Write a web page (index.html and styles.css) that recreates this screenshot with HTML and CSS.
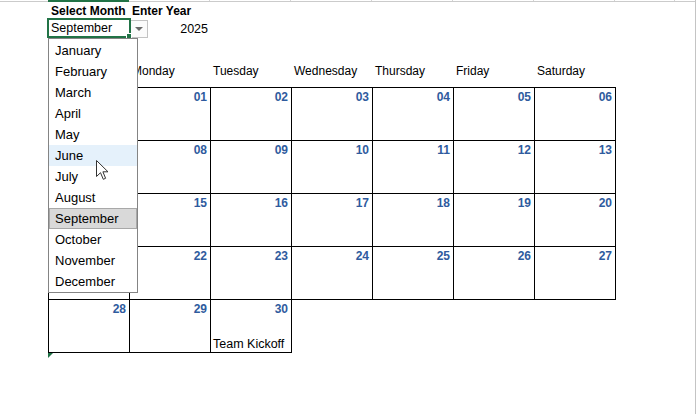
FILE: index.html
```html
<!DOCTYPE html>
<html>
<head>
<meta charset="utf-8">
<link rel="stylesheet" href="styles.css">
</head>
<body>
<div class="page">
  <div class="colhdrs">
    <div class="ch ch-blank"></div>
    <div class="ch ch-a"></div>
    <div class="ch"></div>
    <div class="ch"></div>
    <div class="ch"></div>
    <div class="ch"></div>
    <div class="ch"></div>
    <div class="ch"></div>
    <div class="ch ch-i"></div>
  </div>

  <div class="labels">
    <div class="label">Select Month</div>
    <div class="label">Enter Year</div>
  </div>

  <div class="inputs">
    <div class="select">September<span class="handle"></span></div>
    <div class="ddbtn"><span class="tri"></span></div>
    <div class="year">2025</div>
  </div>

  <div class="dayhdr">
    <div class="dh"></div>
    <div class="dh">Monday</div>
    <div class="dh">Tuesday</div>
    <div class="dh">Wednesday</div>
    <div class="dh">Thursday</div>
    <div class="dh">Friday</div>
    <div class="dh">Saturday</div>
  </div>

  <div class="grid">
    <div class="cell"><span class="num"></span></div>
    <div class="cell"><span class="num">01</span></div>
    <div class="cell"><span class="num">02</span></div>
    <div class="cell"><span class="num">03</span></div>
    <div class="cell"><span class="num">04</span></div>
    <div class="cell"><span class="num">05</span></div>
    <div class="cell"><span class="num">06</span></div>
    <div class="cell"><span class="num"></span></div>
    <div class="cell"><span class="num">08</span></div>
    <div class="cell"><span class="num">09</span></div>
    <div class="cell"><span class="num">10</span></div>
    <div class="cell"><span class="num">11</span></div>
    <div class="cell"><span class="num">12</span></div>
    <div class="cell"><span class="num">13</span></div>
    <div class="cell"><span class="num"></span></div>
    <div class="cell"><span class="num">15</span></div>
    <div class="cell"><span class="num">16</span></div>
    <div class="cell"><span class="num">17</span></div>
    <div class="cell"><span class="num">18</span></div>
    <div class="cell"><span class="num">19</span></div>
    <div class="cell"><span class="num">20</span></div>
    <div class="cell"><span class="num"></span></div>
    <div class="cell"><span class="num">22</span></div>
    <div class="cell"><span class="num">23</span></div>
    <div class="cell"><span class="num">24</span></div>
    <div class="cell"><span class="num">25</span></div>
    <div class="cell"><span class="num">26</span></div>
    <div class="cell"><span class="num">27</span></div>
    <div class="cell"><span class="num">28</span></div>
    <div class="cell"><span class="num">29</span></div>
    <div class="cell"><span class="num">30</span><span class="event">Team Kickoff</span></div>
  </div>
  <div class="mark"></div>

  <ul class="list">
    <li class="item">January</li>
    <li class="item">February</li>
    <li class="item">March</li>
    <li class="item">April</li>
    <li class="item">May</li>
    <li class="item hover">June</li>
    <li class="item">July</li>
    <li class="item">August</li>
    <li class="item selected">September</li>
    <li class="item">October</li>
    <li class="item">November</li>
    <li class="item">December</li>
  </ul>

  <svg class="cursor" width="14" height="21" viewBox="0 0 14 21">
    <path d="M0.5 0.5 L0.5 16.5 L4.5 12.7 L7.3 19.3 L9.6 18.3 L6.9 11.8 L12 11.8 Z" fill="#fff" stroke="#333" stroke-width="1" stroke-linejoin="miter"/>
  </svg>
</div>
</body>
</html>
```

FILE: styles.css
```css
html, body {
  margin: 0;
  padding: 0;
  background: #fff;
}

.page {
  position: relative;
  width: 696px;
  height: 414px;
  box-sizing: border-box;
  border-right: 1px solid #c4c4c4;
  overflow: hidden;
  font-family: "Liberation Sans", Arial, sans-serif;
  font-size: 12px;
  color: #000;
}

/* column header remnant at top */
.colhdrs {
  display: flex;
  align-items: flex-start;
  height: 1px;
  border-bottom: 1px solid #cbcbcb;
}
.ch {
  width: 81px;
  height: 1px;
  box-sizing: border-box;
  border-right: 1px solid #d4d4d4;
  flex: none;
}
.ch-blank {
  width: 48px;
  border-right: none;
}
.ch-a {
  width: 81px;
  height: 2px;
  background: #217346;
  border-right: none;
}
.ch-i {
  width: 60px;
}

/* labels */
.labels {
  display: flex;
  margin-top: 2px;
  padding-left: 48px;
  line-height: 14px;
  font-weight: bold;
}
.label {
  width: 81px;
  padding-left: 3px;
  box-sizing: border-box;
  white-space: nowrap;
}

/* inputs */
.inputs {
  display: flex;
  align-items: flex-start;
  padding-left: 47px;
  height: 20px;
}
.select {
  position: relative;
  width: 84px;
  height: 20px;
  box-sizing: border-box;
  border: 2px solid #217346;
  padding-left: 2px;
  line-height: 16px;
  font-size: 12.5px;
  white-space: nowrap;
}
.handle {
  position: absolute;
  right: -3px;
  bottom: -3px;
  width: 4px;
  height: 4px;
  background: #217346;
  border: 1px solid #fff;
}
.ddbtn {
  display: flex;
  align-items: center;
  justify-content: center;
  width: 18px;
  height: 18px;
  margin-left: -1px;
  margin-top: 2px;
  box-sizing: border-box;
  border: 1px solid #c3c3c3;
  background: #fbfbfb;
}
.tri {
  width: 0;
  height: 0;
  border-left: 4px solid transparent;
  border-right: 4px solid transparent;
  border-top: 4px solid #6a6a6a;
}
.year {
  width: 60px;
  margin-top: 3px;
  text-align: right;
  line-height: 16px;
  font-size: 12.5px;
}

/* weekday headers */
.dayhdr {
  display: flex;
  margin-top: 26px;
  padding-left: 48px;
  height: 23px;
  line-height: 14px;
}
.dh {
  width: 81px;
  padding-left: 3px;
  box-sizing: border-box;
  flex: none;
  white-space: nowrap;
}

/* calendar grid */
.grid {
  display: grid;
  grid-template-columns: repeat(7, 81px);
  grid-auto-rows: 53px;
  margin-left: 48px;
  width: 567px;
  border-left: 1px solid #000;
  border-top: 1px solid #000;
}
.cell {
  display: flex;
  flex-direction: column;
  box-sizing: border-box;
  border-right: 1px solid #000;
  border-bottom: 1px solid #000;
  padding: 2px 3px 1px 2px;
  line-height: 14px;
}
.num {
  text-align: right;
  font-weight: bold;
  color: #2f5b9e;
  height: 14px;
}
.event {
  margin-top: auto;
  white-space: nowrap;
  font-size: 12.5px;
}

.mark {
  width: 0;
  height: 0;
  margin-left: 48px;
  border-top: 5px solid #1e7145;
  border-right: 5px solid transparent;
}

/* open dropdown list */
.list {
  position: absolute;
  left: 48px;
  top: 38px;
  width: 90px;
  margin: 0;
  padding: 1px 0 0 0;
  list-style: none;
  box-sizing: border-box;
  border: 1px solid #848484;
  background: #fff;
  font-size: 13px;
}
.item {
  height: 21px;
  line-height: 21px;
  padding-left: 6px;
  box-sizing: border-box;
  white-space: nowrap;
}
.hover {
  background: #e5f1fb;
}
.selected {
  background: #d9d9d9;
  border: 1px solid #a8a8a8;
  padding-left: 5px;
  line-height: 19px;
}

.cursor {
  position: absolute;
  left: 96px;
  top: 160px;
}
```
